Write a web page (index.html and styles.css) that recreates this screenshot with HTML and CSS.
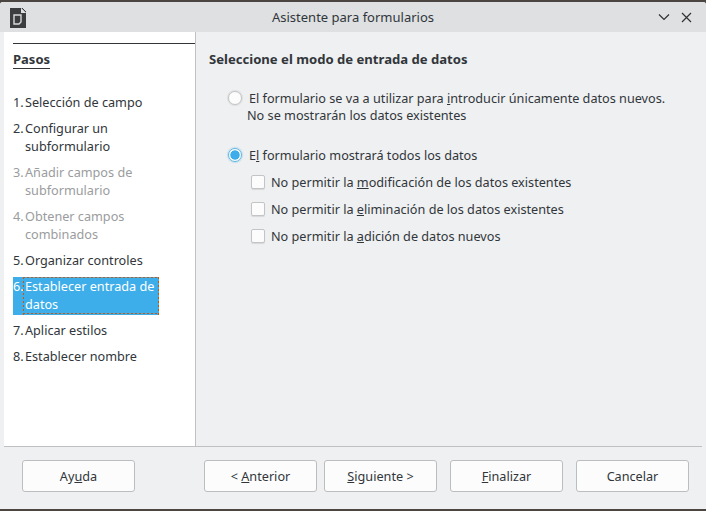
FILE: index.html
```html
<!DOCTYPE html>
<html lang="es">
<head>
<meta charset="utf-8">
<title>Asistente para formularios</title>
<link rel="stylesheet" href="styles.css">
</head>
<body>
<div class="window">
  <header class="titlebar">
    <svg class="app-icon" width="16" height="20" viewBox="0 0 16 20">
      <path d="M0 0H11L16 5V20H0Z" fill="#3b3d3e"/>
      <path d="M11 0L16 5H11Z" fill="#dee0e2"/>
      <path d="M12 0L16 4" stroke="#3b3d3e" fill="none"/>
      <path d="M4 7H11V14L9 16H4Z" fill="none" stroke="#d8d9da" stroke-width="1.4"/>
    </svg>
    <div class="title">Asistente para formularios</div>
    <svg class="win-btn chevron" width="12" height="8" viewBox="0 0 12 8"><path d="M1 1.5L6 6.5L11 1.5" fill="none" stroke="#2f3234" stroke-width="1.2"/></svg>
    <svg class="win-btn close" width="11" height="11" viewBox="0 0 11 11"><path d="M1 1L10 10M10 1L1 10" fill="none" stroke="#2f3234" stroke-width="1.2"/></svg>
  </header>
  <div class="main">
    <nav class="steps">
      <div class="steps-rule"></div>
      <div class="steps-title">Pasos</div>
      <ol class="step-list">
        <li class="step"><span class="num">1.</span><span class="label">Selección de campo</span></li>
        <li class="step"><span class="num">2.</span><span class="label">Configurar un subformulario</span></li>
        <li class="step off"><span class="num">3.</span><span class="label">Añadir campos de subformulario</span></li>
        <li class="step off"><span class="num">4.</span><span class="label">Obtener campos combinados</span></li>
        <li class="step"><span class="num">5.</span><span class="label">Organizar controles</span></li>
        <li class="step current"><span class="num">6.</span><span class="label">Establecer entrada de datos</span></li>
        <li class="step"><span class="num">7.</span><span class="label">Aplicar estilos</span></li>
        <li class="step"><span class="num">8.</span><span class="label">Establecer nombre</span></li>
      </ol>
    </nav>
    <section class="content">
      <h1 class="heading">Seleccione el modo de entrada de datos</h1>
      <div class="option first">
        <span class="radio"></span>
        <span class="opt-text">El formulario se va a utilizar para <u>i</u>ntroducir únicamente datos nuevos.</span>
      </div>
      <div class="opt-second">No se mostrarán los datos existentes</div>
      <div class="option second">
        <span class="radio on"></span>
        <span class="opt-text">E<u>l</u> formulario mostrará todos los datos</span>
      </div>
      <div class="checks">
        <div class="check-row"><span class="check"></span><span>No permitir la <u>m</u>odificación de los datos existentes</span></div>
        <div class="check-row"><span class="check"></span><span>No permitir la <u>e</u>liminación de los datos existentes</span></div>
        <div class="check-row"><span class="check"></span><span>No permitir la <u>a</u>dición de datos nuevos</span></div>
      </div>
    </section>
  </div>
  <footer class="footer">
    <button class="btn"><span>Ay<u>u</u>da</span></button>
    <div class="nav-btns">
      <div class="nav-pair">
        <button class="btn">&lt; <u>A</u>nterior</button>
        <button class="btn"><u>S</u>iguiente &gt;</button>
      </div>
      <button class="btn"><u>F</u>inalizar</button>
      <button class="btn">Cancelar</button>
    </div>
  </footer>
</div>
</body>
</html>
```
FILE: styles.css
```css
html, body { margin: 0; padding: 0; }
body {
  width: 706px;
  height: 511px;
  overflow: hidden;
  background: #4a4540;
  font-family: "Noto Sans", sans-serif;
  font-size: 12.67px;
  color: #31363b;
}
.window {
  height: 507px;
  margin-top: 2px;
  display: flex;
  flex-direction: column;
  background: #eff0f1;
  border-radius: 3px 3px 0 0;
  overflow: hidden;
}
.titlebar {
  height: 30px;
  flex: none;
  display: flex;
  align-items: center;
  position: relative;
  background: #dee0e2;
  padding: 0 14px 0 10px;
}
.app-icon { flex: none; margin-top: 2px; }
.title {
  position: absolute;
  left: 0;
  right: 0;
  top: 6px;
  text-align: center;
  font-size: 13px;
  line-height: 18px;
}
.win-btn { flex: none; position: relative; }
.chevron { margin-left: auto; margin-right: 11px; }
.main {
  height: 414px;
  flex: none;
  display: flex;
  margin: 0 4px;
  border-bottom: 1px solid #bfc0c2;
}
.steps {
  flex: none;
  background: #fff;
  border-right: 1px solid #bfc0c2;
  padding: 11px 0 0 9px;
  width: 182px;
}
.steps-rule { height: 1px; background: #31363b; margin-bottom: 6px; }
.steps-title {
  display: inline-block;
  font-size: 13px;
  font-weight: 700;
  line-height: 18px;
  border-bottom: 1px solid #31363b;
}
.step-list {
  list-style: none;
  margin: 24px 0 0;
  padding: 0;
  width: 146px;
}
.step {
  display: flex;
  line-height: 18px;
  margin-bottom: 8px;
}
.step.off { color: #9a9c9e; }
.num { width: 12px; flex: none; }
.label { flex: 1; }
.step.current {
  background: #3daee9;
  color: #fff;
  margin-bottom: 6px;
}
.step.current .num { width: 10px; }
.step.current .label {
  padding: 0 1px 2px 2px;
  background:
    linear-gradient(90deg, #d35400 50%, transparent 50%) left top / 4px 1px repeat-x,
    linear-gradient(90deg, #d35400 50%, transparent 50%) left bottom 1px / 4px 1px repeat-x,
    linear-gradient(180deg, #d35400 50%, transparent 50%) left top / 1px 4px repeat-y,
    linear-gradient(180deg, #d35400 50%, transparent 50%) right top / 1px 4px repeat-y;
}
.content { flex: 1; padding: 18px 0 0 13px; }
.heading {
  margin: 0;
  font-size: 13.1px;
  font-weight: 700;
  line-height: 18px;
}
.option { display: flex; align-items: center; gap: 7px; line-height: 18px; margin-left: 19px; }
.option.first { margin-top: 21px; }
.option.second { margin-top: 22px; }
.opt-second { margin: -1px 0 0 38px; line-height: 18px; }
.radio {
  width: 12px;
  height: 12px;
  flex: none;
  border: 1px solid #c3c4c6;
  border-radius: 50%;
  background: #fcfcfc;
  box-shadow: 0 0 1px 1px rgba(0,0,0,.07);
}
.radio.on {
  border-color: #5fb5e2;
  background: radial-gradient(circle, #3daee9 0 4.3px, #fcfcfc 5px);
  box-shadow: 0 0 1px 1px rgba(61,174,233,.25);
}
.checks { margin: 9px 0 0 42px; }
.check-row { display: flex; align-items: center; gap: 6px; line-height: 18px; margin-bottom: 9px; }
.check {
  width: 12px;
  height: 12px;
  flex: none;
  border: 1px solid #c3c4c6;
  border-radius: 2px;
  background: #fcfcfc;
  box-shadow: 0 1px 1px rgba(0,0,0,.1);
}
.footer {
  flex: 1;
  display: flex;
  justify-content: space-between;
  align-items: flex-start;
  padding: 13px 17px 0 22px;
}
.nav-btns { display: flex; gap: 13px; }
.nav-pair { display: flex; gap: 7px; }
.btn {
  width: 113px;
  height: 32px;
  padding: 0;
  border: 1px solid #bcbdbf;
  border-radius: 3px;
  background: #fcfcfc;
  color: inherit;
  font: inherit;
  line-height: 18px;
}
```
